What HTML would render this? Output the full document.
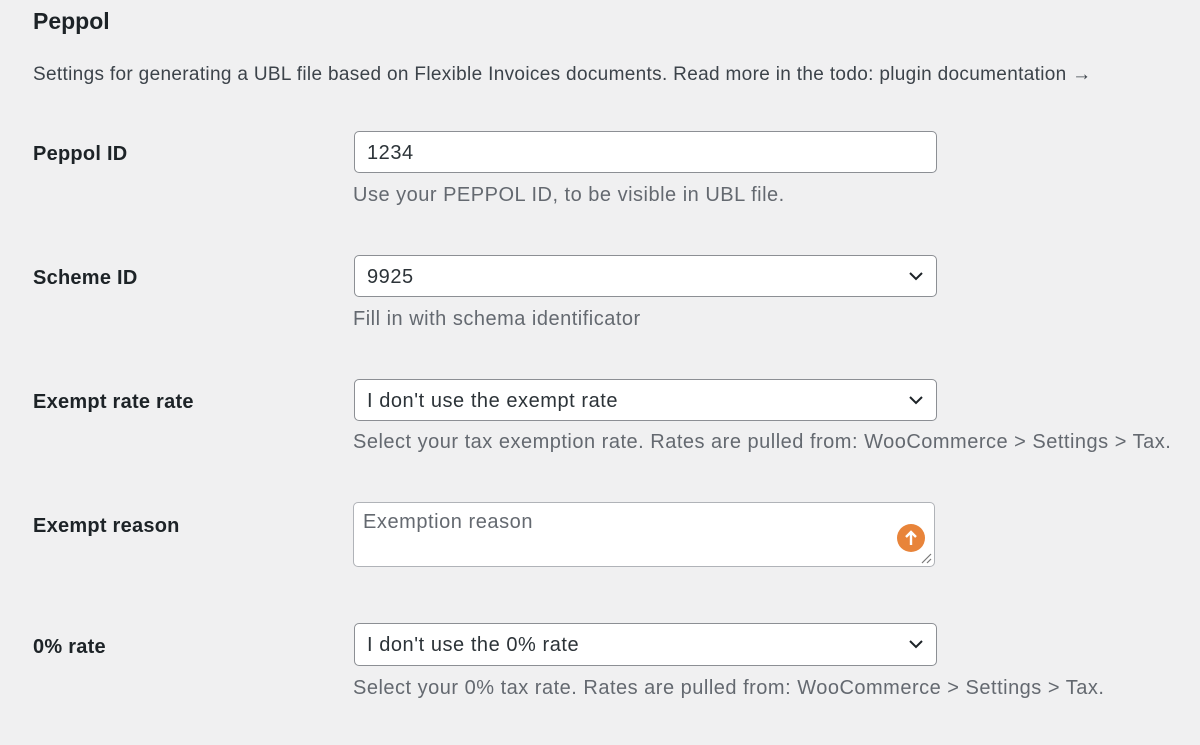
<!DOCTYPE html>
<html><head><meta charset="utf-8"><style>
body{margin:0;width:1200px;height:745px;background:#f0f0f1;font-family:"Liberation Sans",sans-serif;color:#1d2327;position:relative;overflow:hidden}
.a{position:absolute;white-space:nowrap}
h1{position:absolute;left:33px;top:8px;margin:0;font-size:23px;font-weight:bold}
.lbl{font-weight:bold;font-size:20px;letter-spacing:0.25px;left:33px}
.d{color:#646970;font-size:20px;letter-spacing:0.5px;left:353px}
.box{position:absolute;left:354px;width:583px;height:42px;background:#fff;border:1px solid #8c8f94;border-radius:5px;box-sizing:border-box;font-size:20px;letter-spacing:0.55px;line-height:42px;padding-left:12px;color:#2c3338}
.chev{position:absolute;right:12px;top:14px}
</style></head><body>
<h1>Peppol</h1>
<div class="a" style="left:33px;top:64px;font-size:19px;letter-spacing:0.33px;color:#3c434a">Settings for generating a UBL file based on Flexible Invoices documents. Read more in the todo: plugin documentation →</div>

<div class="a lbl" style="top:143px">Peppol ID</div>
<div class="box" style="top:131px">1234</div>
<div class="a d" style="top:184px">Use your PEPPOL ID, to be visible in UBL file.</div>

<div class="a lbl" style="top:267px">Scheme ID</div>
<div class="box" style="top:255px">9925<svg class="chev" width="16" height="12" viewBox="0 0 16 12"><path d="M2 3l6 6 6-6" fill="none" stroke="#1d2327" stroke-width="2"/></svg></div>
<div class="a d" style="top:308px">Fill in with schema identificator</div>

<div class="a lbl" style="top:391px">Exempt rate rate</div>
<div class="box" style="top:379px">I don't use the exempt rate<svg class="chev" width="16" height="12" viewBox="0 0 16 12"><path d="M2 3l6 6 6-6" fill="none" stroke="#1d2327" stroke-width="2"/></svg></div>
<div class="a d" style="top:431px">Select your tax exemption rate. Rates are pulled from: WooCommerce &gt; Settings &gt; Tax.</div>

<div class="a lbl" style="top:515px">Exempt reason</div>
<div class="box" style="top:502px;left:353px;width:582px;height:65px;line-height:normal;padding:8px 9px;color:#646970;border-color:#b0b3b8">Exemption reason
<svg style="position:absolute;left:542px;top:20px" width="30" height="30" viewBox="0 0 30 30"><circle cx="15" cy="15" r="14" fill="#e8843a"/><path d="M15 22V9M10 14l5-5 5 5" fill="none" stroke="#fff" stroke-width="2.4"/></svg>
<svg style="position:absolute;right:2px;bottom:2px" width="12" height="12" viewBox="0 0 12 12"><path d="M11 2L2 11M11 7L7 11" stroke="#777" stroke-width="1.2"/></svg></div>

<div class="a lbl" style="top:636px">0% rate</div>
<div class="box" style="top:623px;height:43px">I don't use the 0% rate<svg class="chev" width="16" height="12" viewBox="0 0 16 12"><path d="M2 3l6 6 6-6" fill="none" stroke="#1d2327" stroke-width="2"/></svg></div>
<div class="a d" style="top:677px">Select your 0% tax rate. Rates are pulled from: WooCommerce &gt; Settings &gt; Tax.</div>
</body></html>
